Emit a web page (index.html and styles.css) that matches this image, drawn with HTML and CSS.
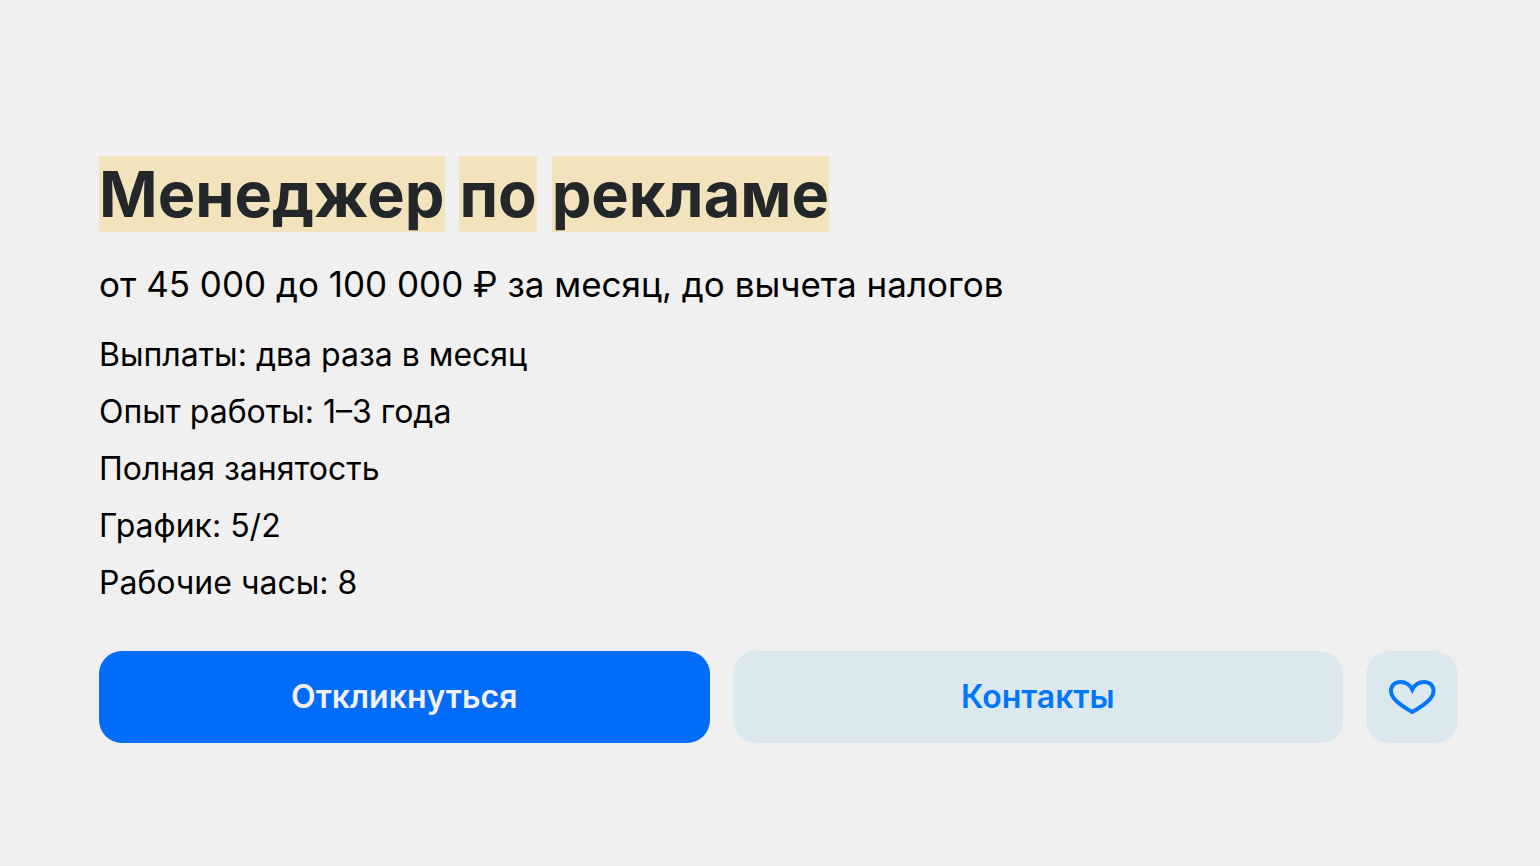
FILE: index.html
```html
<!DOCTYPE html>
<html lang="ru">
<head>
<meta charset="utf-8">
<title>Менеджер по рекламе</title>
<link rel="stylesheet" href="styles.css">
</head>
<body>
<main class="vacancy">
  <h1 class="title"><mark>Менеджер</mark> <mark>по</mark> <mark>рекламе</mark></h1>
  <p class="salary">от 45 000 до 100 000 ₽ за месяц, до вычета налогов</p>
  <ul class="details">
    <li>Выплаты: два раза в месяц</li>
    <li>Опыт работы: 1–3 года</li>
    <li>Полная занятость</li>
    <li>График: 5/2</li>
    <li>Рабочие часы: 8</li>
  </ul>
  <div class="actions">
    <button class="button primary" type="button">Откликнуться</button>
    <button class="button secondary" type="button">Контакты</button>
    <button class="button secondary favorite" type="button" aria-label="В избранное">
      <svg class="heart" viewBox="0 0 48 36" aria-hidden="true"><path d="M24.300 33C18 29.500 10.500 25 6 19.500C0 12 3.500 3 12.500 3C18 3 22 6 24.300 10.500C26.600 6 30.500 3 36 3C45 3 48.500 12 42.500 19.500C38 25 30.500 29.500 24.300 33Z"/></svg>
    </button>
  </div>
</main>
</body>
</html>
```
FILE: styles.css
```css
* { box-sizing: border-box; }
body {
  margin: 0;
  background: #f0f0f0;
  color: #000;
  font-family: Inter, "Liberation Sans", sans-serif;
}
.vacancy { padding: 152px 82px 120px 99px; }
.title {
  margin: 0;
  font-size: 63px;
  line-height: 84px;
  font-weight: 700;
  color: #242729;
}
.title mark { background: #f3e3bd; color: inherit; }
.salary {
  margin: 24px 0 0;
  font-size: 35px;
  line-height: 48px;
}
.details {
  display: grid;
  gap: 17px;
  margin: 27px 0 0;
  padding: 0;
  list-style: none;
  font-size: 32px;
  line-height: 40px;
}
.actions { display: flex; gap: 23px; margin-top: 48px; }
.button {
  flex: 1;
  height: 92px;
  padding: 0 0 2px;
  border: 0;
  border-radius: 23px;
  font: inherit;
  font-size: 32px;
  font-weight: 600;
}
.primary { background: #006cf8; color: #f0f0f5; }
.secondary { background: #dce8f0; color: #0077f8; }
.favorite {
  flex: 0 0 92px;
  display: grid;
  place-items: center;
  padding: 0;
}
.heart {
  width: 48px;
  height: 36px;
  fill: none;
  stroke: currentColor;
  stroke-width: 4;
  stroke-linejoin: miter;
}
```
